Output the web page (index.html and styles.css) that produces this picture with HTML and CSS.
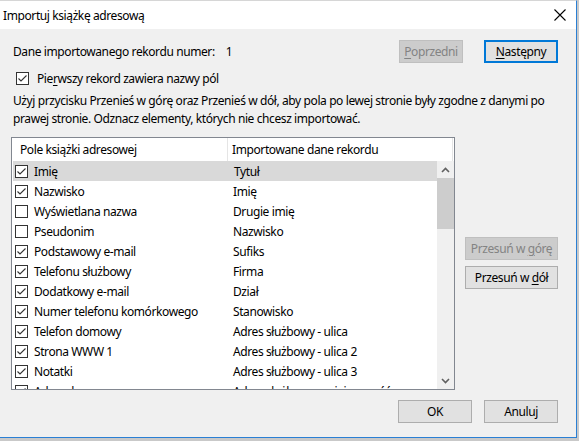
FILE: index.html
```html
<!DOCTYPE html>
<html lang="pl">
<head>
<meta charset="utf-8">
<title>Importuj książkę adresową</title>
<link rel="stylesheet" href="styles.css">
</head>
<body>
<div class="window">
  <div class="titlebar">
    <span class="title">Importuj książkę adresową</span>
    <span class="close">
      <svg width="12" height="12" viewBox="0 0 12 12"><path d="M0.5 0.5 L11.5 11.5 M11.5 0.5 L0.5 11.5" stroke="#000" stroke-width="1.1" fill="none"/></svg>
    </span>
  </div>
  <div class="body">
    <div class="record-row">
      <span class="record-label">Dane importowanego rekordu numer:</span>
      <span class="record-num">1</span>
      <span class="spacer"></span>
      <button class="btn btn-disabled btn-prev"><u>P</u>oprzedni</button>
      <button class="btn btn-default btn-next"><u>N</u>astępny</button>
    </div>
    <label class="check-row">
      <span class="cb checked"><svg width="13" height="13" viewBox="0 0 13 13"><polyline points="2.5,6.5 5,9 10.5,3.5" stroke="#333" stroke-width="1.1" fill="none"/></svg></span>
      <span>Pie<u>r</u>wszy rekord zawiera nazwy pól</span>
    </label>
    <p class="hint">Użyj przycisku Przenieś w górę oraz Przenieś w dół, aby pola po lewej stronie były zgodne z danymi po prawej stronie. Odznacz elementy, których nie chcesz importować.</p>
    <div class="main">
      <div class="listbox">
        <div class="lheader">
          <div class="hcol hcol1">Pole książki adresowej</div>
          <div class="hcol hcol2">Importowane dane rekordu</div>
        </div>
        <div class="lbody">
          <div class="rows">
            <div class="row selected"><div class="c1"><span class="cb checked"><svg width="13" height="13" viewBox="0 0 13 13"><polyline points="2.5,6.5 5,9 10.5,3.5" stroke="#333" stroke-width="1.1" fill="none"/></svg></span>Imię</div><div class="c2">Tytuł</div></div>
            <div class="row"><div class="c1"><span class="cb checked"><svg width="13" height="13" viewBox="0 0 13 13"><polyline points="2.5,6.5 5,9 10.5,3.5" stroke="#333" stroke-width="1.1" fill="none"/></svg></span>Nazwisko</div><div class="c2">Imię</div></div>
            <div class="row"><div class="c1"><span class="cb"></span>Wyświetlana nazwa</div><div class="c2">Drugie imię</div></div>
            <div class="row"><div class="c1"><span class="cb"></span>Pseudonim</div><div class="c2">Nazwisko</div></div>
            <div class="row"><div class="c1"><span class="cb checked"><svg width="13" height="13" viewBox="0 0 13 13"><polyline points="2.5,6.5 5,9 10.5,3.5" stroke="#333" stroke-width="1.1" fill="none"/></svg></span>Podstawowy e-mail</div><div class="c2">Sufiks</div></div>
            <div class="row"><div class="c1"><span class="cb checked"><svg width="13" height="13" viewBox="0 0 13 13"><polyline points="2.5,6.5 5,9 10.5,3.5" stroke="#333" stroke-width="1.1" fill="none"/></svg></span>Telefonu służbowy</div><div class="c2">Firma</div></div>
            <div class="row"><div class="c1"><span class="cb checked"><svg width="13" height="13" viewBox="0 0 13 13"><polyline points="2.5,6.5 5,9 10.5,3.5" stroke="#333" stroke-width="1.1" fill="none"/></svg></span>Dodatkowy e-mail</div><div class="c2">Dział</div></div>
            <div class="row"><div class="c1"><span class="cb checked"><svg width="13" height="13" viewBox="0 0 13 13"><polyline points="2.5,6.5 5,9 10.5,3.5" stroke="#333" stroke-width="1.1" fill="none"/></svg></span>Numer telefonu komórkowego</div><div class="c2">Stanowisko</div></div>
            <div class="row"><div class="c1"><span class="cb checked"><svg width="13" height="13" viewBox="0 0 13 13"><polyline points="2.5,6.5 5,9 10.5,3.5" stroke="#333" stroke-width="1.1" fill="none"/></svg></span>Telefon domowy</div><div class="c2">Adres służbowy - ulica</div></div>
            <div class="row"><div class="c1"><span class="cb checked"><svg width="13" height="13" viewBox="0 0 13 13"><polyline points="2.5,6.5 5,9 10.5,3.5" stroke="#333" stroke-width="1.1" fill="none"/></svg></span>Strona WWW 1</div><div class="c2">Adres służbowy - ulica 2</div></div>
            <div class="row"><div class="c1"><span class="cb checked"><svg width="13" height="13" viewBox="0 0 13 13"><polyline points="2.5,6.5 5,9 10.5,3.5" stroke="#333" stroke-width="1.1" fill="none"/></svg></span>Notatki</div><div class="c2">Adres służbowy - ulica 3</div></div>
            <div class="row"><div class="c1"><span class="cb checked"><svg width="13" height="13" viewBox="0 0 13 13"><polyline points="2.5,6.5 5,9 10.5,3.5" stroke="#333" stroke-width="1.1" fill="none"/></svg></span>Adres domowy</div><div class="c2">Adres służbowy - miejscowość</div></div>
          </div>
          <div class="scrollbar">
            <div class="sb-arrow"><svg width="9" height="6" viewBox="0 0 9 6"><polyline points="1,5 4.5,1.5 8,5" stroke="#606060" stroke-width="1.6" fill="none"/></svg></div>
            <div class="sb-track"><div class="sb-thumb"></div></div>
            <div class="sb-arrow"><svg width="9" height="6" viewBox="0 0 9 6"><polyline points="1,1 4.5,4.5 8,1" stroke="#606060" stroke-width="1.6" fill="none"/></svg></div>
          </div>
        </div>
      </div>
      <div class="side">
        <button class="btn btn-disabled btn-side">Przesuń w <u>g</u>órę</button>
        <button class="btn btn-side">Przesuń w <u>d</u>ół</button>
      </div>
    </div>
    <div class="footer">
      <button class="btn btn-foot">OK</button>
      <button class="btn btn-foot">Anuluj</button>
    </div>
  </div>
</div>
</body>
</html>
```

FILE: styles.css
```css
* { box-sizing: border-box; }
html, body { margin: 0; padding: 0; }
body {
  width: 579px;
  height: 441px;
  background: #c9c9c9;
  font-family: "Noto Sans", "Open Sans", sans-serif;
  font-size: 12px;
  letter-spacing: -0.4px;
  color: #000;
  overflow: hidden;
}
.window {
  width: 577px;
  height: 438px;
  display: flex;
  flex-direction: column;
  border-right: 1px solid #2a7fd4;
  border-bottom: 1px solid #2a7fd4;
  border-top: 1px solid #d6d6d6;
  background: #f0f0f0;
}
.titlebar {
  height: 28px;
  background: #fff;
  display: flex;
  align-items: center;
  padding-left: 3px;
  padding-right: 10px;
}
.title { flex: 1; font-size: 12px; }
.close { display: flex; align-items: center; }
.body {
  flex: 1;
  padding: 11px 18px 0 11px;
  display: flex;
  flex-direction: column;
}
.record-row {
  display: flex;
  align-items: center;
  height: 23px;
}
.record-label { margin-left: 2px; }
.record-num { margin-left: 11px; }
.spacer { flex: 1; }
.btn {
  font-family: inherit;
  font-size: 12px;
  letter-spacing: inherit;
  color: #000;
  background: #e1e1e1;
  border: 1px solid #adadad;
  height: 23px;
  padding: 0;
  margin: 0;
  line-height: 20px;
}
.btn u { text-decoration-thickness: 1px; text-underline-offset: 2px; }
.btn-disabled {
  background: #cccccc;
  border-color: #bfbfbf;
  color: #838383;
}
.btn-default { border: 2px solid #0078d7; }
.btn-prev { width: 64px; }
.btn-next { width: 74px; margin-left: 21px; }
.check-row {
  display: flex;
  align-items: center;
  gap: 8px;
  margin-top: 8px;
  margin-left: 5px;
  height: 14px;
}
.check-row u { text-underline-offset: 2px; }
.cb {
  width: 13px;
  height: 13px;
  border: 1px solid #333;
  background: #fff;
  display: inline-flex;
  flex: none;
  position: relative;
}
.cb svg { position: absolute; left: -1px; top: -1px; }
.hint {
  margin: 7px 0 0 2px;
  line-height: 18px;
  width: 540px;
}
.main {
  display: flex;
  margin-top: 9px;
  gap: 10px;
}
.listbox {
  width: 445px;
  height: 253px;
  border: 1px solid #828790;
  background: #fff;
  display: flex;
  flex-direction: column;
  overflow: hidden;
}
.lheader {
  display: flex;
  height: 23px;
  flex: none;
}
.hcol {
  display: flex;
  align-items: center;
  padding-left: 8px;
  border-right: 1px solid #e5e5e5;
}
.hcol1 { width: 216px; }
.hcol2 { width: 225px; padding-left: 4px; }
.lbody {
  flex: 1;
  display: flex;
  min-height: 0;
}
.rows {
  flex: 1;
  overflow: hidden;
}
.row {
  display: flex;
  height: 20px;
  align-items: center;
}
.row.selected { background: #d9d9d9; margin-left: 1px; }
.row.selected .c1 { padding-left: 2px; }
.c1 {
  width: 216px;
  display: flex;
  align-items: center;
  gap: 6px;
  padding-left: 3px;
}
.c2 { padding-left: 5px; white-space: nowrap; }
.scrollbar {
  width: 17px;
  flex: none;
  background: #f0f0f0;
  display: flex;
  flex-direction: column;
}
.sb-arrow {
  height: 17px;
  display: flex;
  align-items: center;
  justify-content: center;
  flex: none;
}
.sb-track { flex: 1; }
.sb-thumb {
  width: 100%;
  height: 51px;
  background: #cdcdcd;
}
.side {
  display: flex;
  flex-direction: column;
  padding-top: 100px;
  gap: 6px;
}
.btn-side { width: 93px; }
.footer {
  display: flex;
  justify-content: flex-end;
  gap: 12px;
  margin-top: 10px;
}
.btn-foot { width: 74px; }
```
